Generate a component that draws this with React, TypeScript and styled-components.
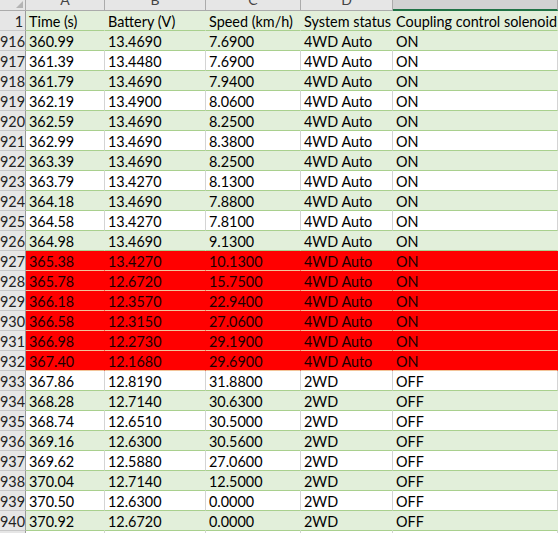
import React from "react";
import styled, { createGlobalStyle, css } from "styled-components";

const Global = createGlobalStyle`
  html, body { margin: 0; padding: 0; background: #ffffff; overflow: hidden; }
  body { font-family: "Lato", "Liberation Sans", sans-serif; }
`;

type Kind = "green" | "white" | "red";

const COLS = "26px 79px 101px 95px 92px 1fr";

const Sheet = styled.div`
  width: 558px;
  height: 533px;
  overflow: hidden;
  display: flex;
  flex-direction: column;
  font-family: "Lato", "Liberation Sans", sans-serif;
  font-size: 14.4px;
  color: #000;
`;

const HeadRow = styled.div`
  display: grid;
  grid-template-columns: ${COLS};
  height: 11px;
  flex: none;
`;

const HeadCell = styled.div<{ $selected?: boolean }>`
  box-sizing: border-box;
  height: 11px;
  overflow: hidden;
  background: ${(p) => (p.$selected ? "#d2d2d2" : "#e6e6e6")};
  border-right: 1px solid #ababab;
  border-bottom: ${(p) => (p.$selected ? "2px solid #217346" : "1px solid #ababab")};
  color: #444;
  text-align: center;
  font-size: 14px;
  line-height: 20px;
  & > span { display: block; margin-top: -10px; }
`;

const Corner = styled.div`
  box-sizing: border-box;
  height: 11px;
  background: #e6e6e6;
  border-right: 1px solid #ababab;
  border-bottom: 1px solid #ababab;
  display: flex;
  justify-content: flex-end;
  align-items: flex-end;
  padding: 0 2px 2px 0;
`;

const Row = styled.div`
  display: grid;
  grid-template-columns: ${COLS};
  height: 20px;
  flex: none;
`;

const RowNum = styled.div`
  box-sizing: border-box;
  height: 20px;
  background: #e6e6e6;
  border-right: 1px solid #9b9b9b;
  border-bottom: 1px solid #c8c8c8;
  text-align: right;
  padding-right: 2px;
  line-height: 21px;
  overflow: hidden;
  color: #222;
`;

const bgFor = (k: Kind) => (k === "green" ? "#e2efda" : k === "red" ? "#ff0000" : "#ffffff");
const vFor = (k: Kind) => (k === "white" ? "#d4d4d4" : bgFor(k));
const hFor = (k: Kind) => (k === "red" ? "#f2c49a" : "#a9d08e");

const Cell = styled.div<{ $kind: Kind }>`
  box-sizing: border-box;
  height: 20px;
  padding-left: 3px;
  line-height: 21px;
  white-space: nowrap;
  overflow: hidden;
  ${(p) => css`
    background: ${bgFor(p.$kind)};
    border-right: 1px solid ${vFor(p.$kind)};
    border-bottom: 1px solid ${hFor(p.$kind)};
    color: ${p.$kind === "red" ? "#1a0000" : "#000"};
  `}
`;

const data: [number, string, string, string, string, string][] = [
  [916, "360.99", "13.4690", "7.6900", "4WD Auto", "ON"],
  [917, "361.39", "13.4480", "7.6900", "4WD Auto", "ON"],
  [918, "361.79", "13.4690", "7.9400", "4WD Auto", "ON"],
  [919, "362.19", "13.4900", "8.0600", "4WD Auto", "ON"],
  [920, "362.59", "13.4690", "8.2500", "4WD Auto", "ON"],
  [921, "362.99", "13.4690", "8.3800", "4WD Auto", "ON"],
  [922, "363.39", "13.4690", "8.2500", "4WD Auto", "ON"],
  [923, "363.79", "13.4270", "8.1300", "4WD Auto", "ON"],
  [924, "364.18", "13.4690", "7.8800", "4WD Auto", "ON"],
  [925, "364.58", "13.4270", "7.8100", "4WD Auto", "ON"],
  [926, "364.98", "13.4690", "9.1300", "4WD Auto", "ON"],
  [927, "365.38", "13.4270", "10.1300", "4WD Auto", "ON"],
  [928, "365.78", "12.6720", "15.7500", "4WD Auto", "ON"],
  [929, "366.18", "12.3570", "22.9400", "4WD Auto", "ON"],
  [930, "366.58", "12.3150", "27.0600", "4WD Auto", "ON"],
  [931, "366.98", "12.2730", "29.1900", "4WD Auto", "ON"],
  [932, "367.40", "12.1680", "29.6900", "4WD Auto", "ON"],
  [933, "367.86", "12.8190", "31.8800", "2WD", "OFF"],
  [934, "368.28", "12.7140", "30.6300", "2WD", "OFF"],
  [935, "368.74", "12.6510", "30.5000", "2WD", "OFF"],
  [936, "369.16", "12.6300", "30.5600", "2WD", "OFF"],
  [937, "369.62", "12.5880", "27.0600", "2WD", "OFF"],
  [938, "370.04", "12.7140", "12.5000", "2WD", "OFF"],
  [939, "370.50", "12.6300", "0.0000", "2WD", "OFF"],
  [940, "370.92", "12.6720", "0.0000", "2WD", "OFF"],
];

const kindOf = (n: number): Kind => {
  if (n >= 927 && n <= 932) return "red";
  return n % 2 === 0 ? "green" : "white";
};

export default function App() {
  return (
    <Sheet>
      <Global />
      <HeadRow>
        <Corner>
          <svg width="7" height="7" viewBox="0 0 7 7">
            <polygon points="7,0 7,7 0,7" fill="#b4b4b4" />
          </svg>
        </Corner>
        {["A", "B", "C", "D"].map((l) => (
          <HeadCell key={l}>
            <span>{l}</span>
          </HeadCell>
        ))}
        <HeadCell $selected>
          <span style={{ marginLeft: 318 }}>E</span>
        </HeadCell>
      </HeadRow>
      <Row>
        <RowNum>1</RowNum>
        {["Time (s)", "Battery (V)", "Speed (km/h)", "System status", "Coupling control solenoid"].map((t) => (
          <Cell key={t} $kind="green">
            {t}
          </Cell>
        ))}
      </Row>
      {data.map(([n, ...vals]) => (
        <Row key={n}>
          <RowNum>{n}</RowNum>
          {vals.map((v, i) => (
            <Cell key={i} $kind={kindOf(n)}>
              {v}
            </Cell>
          ))}
        </Row>
      ))}
      <Row>
        <RowNum>941</RowNum>
        {[0, 1, 2, 3, 4].map((i) => (
          <Cell key={i} $kind="white" />
        ))}
      </Row>
    </Sheet>
  );
}
